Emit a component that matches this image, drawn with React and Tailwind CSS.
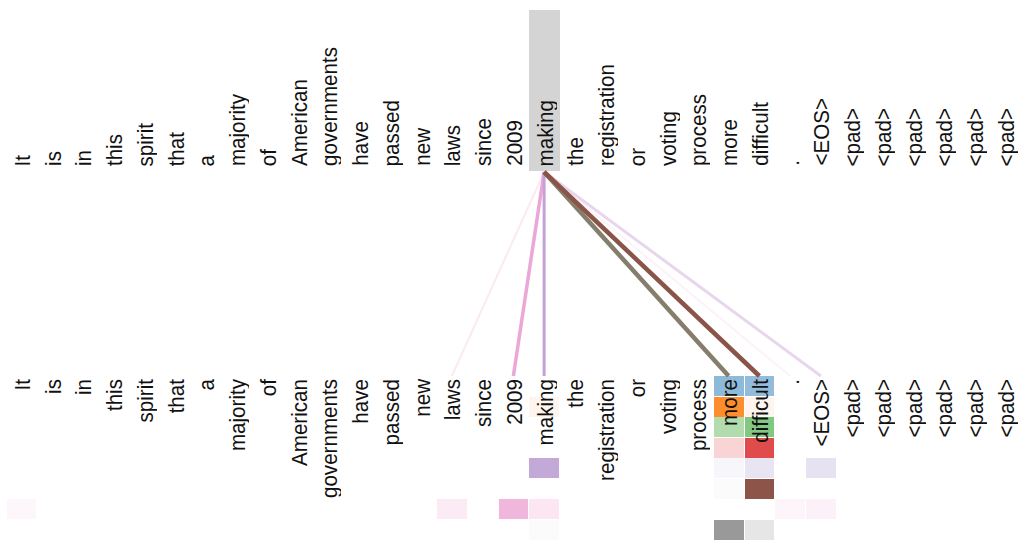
import React from "react";

const tokens = [
  "It", "is", "in", "this", "spirit", "that", "a", "majority", "of", "American",
  "governments", "have", "passed", "new", "laws", "since", "2009", "making", "the",
  "registration", "or", "voting", "process", "more", "difficult", ".", "<EOS>",
  "<pad>", "<pad>", "<pad>", "<pad>", "<pad>", "<pad>",
];

// heat cells: token index -> { row: color }
const cells = {
  0: { 6: "#fdf6fa" },
  14: { 6: "#fcebf4" },
  16: { 6: "#f0b6dc" },
  17: { 1: "#fef5ee", 4: "#c3a9d8", 6: "#fbe6f1", 7: "#fbfbfb" },
  23: { 0: "#8ebad9", 1: "#fd8d2d", 2: "#b2dcae", 3: "#f8d4d4", 4: "#f7f6fb", 5: "#fbfbfc", 7: "#999999" },
  24: { 0: "#93bbdc", 1: "#fff5ee", 2: "#82c782", 3: "#e04b4b", 4: "#e8e4f2", 5: "#8d5549", 7: "#e6e6e6" },
  25: { 6: "#fdf5fa" },
  26: { 4: "#e6e2f2", 6: "#fcf1f8" },
};

const rowStart = [
  "row-start-1", "row-start-2", "row-start-3", "row-start-4",
  "row-start-5", "row-start-6", "row-start-7", "row-start-8",
];

const COL = 30.75;
const X0 = 6;
const cx = (i) => X0 + i * COL + COL / 2;

const lines = [
  { to: 14, color: "#fbe9f3", w: 2 },
  { to: 25, color: "#fdf2f8", w: 2 },
  { to: 26, color: "#e8d6ef", w: 3 },
  { to: 16, color: "#eaa7d7", w: 3.5 },
  { to: 17, color: "#c4a2d6", w: 3 },
  { to: 23, color: "#857e6c", w: 4.5 },
  { to: 24, color: "#8a5548", w: 4.5 },
];

function Word({ children }) {
  return (
    <span className="[writing-mode:vertical-rl] rotate-180 scale-x-[1.08] whitespace-nowrap leading-[23px]">
      {children}
    </span>
  );
}

export default function App() {
  return (
    <div
      className="relative w-[1021px] h-[551px] overflow-hidden bg-white text-[20.6px] text-[#111]"
      style={{ fontFamily: '"Liberation Sans", Arial, sans-serif' }}
    >
      {/* top tokens */}
      <div className="flex pl-[6px] mt-[10px] h-[161px]">
        {tokens.map((t, i) => (
          <div
            key={i}
            className={
              "w-[30.75px] shrink-0 h-full flex flex-col justify-end items-center pb-[5px] " +
              (i === 17 ? "bg-[#d4d4d4]" : "")
            }
          >
            <Word>{t}</Word>
          </div>
        ))}
      </div>

      {/* bottom tokens with heat cells */}
      <div className="flex pl-[6px] mt-[205px]">
        {tokens.map((t, i) => (
          <div
            key={i}
            className="w-[30.75px] shrink-0 grid grid-cols-1 grid-rows-[repeat(8,20.5px)]"
          >
            {cells[i] &&
              Object.entries(cells[i]).map(([r, c]) => (
                <div
                  key={r}
                  className={rowStart[r] + " col-start-1 mx-[0.5px] my-[0.25px]"}
                  style={{ backgroundColor: c }}
                />
              ))}
            <div className="row-start-1 row-span-8 col-start-1 z-10 self-start justify-self-center pt-[3px] flex">
              <Word>{t}</Word>
            </div>
          </div>
        ))}
      </div>

      {/* attention lines */}
      <svg
        className="absolute inset-0 pointer-events-none"
        width="1021"
        height="551"
        viewBox="0 0 1021 551"
      >
        {lines.map((l, k) => (
          <line
            key={k}
            x1={cx(17)}
            y1={172}
            x2={cx(l.to)}
            y2={376}
            stroke={l.color}
            strokeWidth={l.w}
          />
        ))}
      </svg>
    </div>
  );
}
